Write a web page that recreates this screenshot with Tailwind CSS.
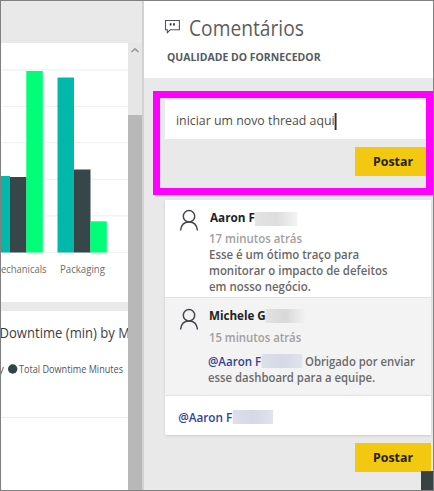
<!DOCTYPE html>
<html lang="pt">
<head>
<meta charset="utf-8">
<title>Comentários</title>
<script src="https://cdn.jsdelivr.net/npm/@tailwindcss/browser@4"></script>
</head>
<body class="bg-[#e9e9e9]">
<div class="relative flex h-[491px] w-[434px] overflow-hidden border border-[#808080] bg-[#e9e9e9] font-['Open_Sans','Noto_Sans',sans-serif] whitespace-nowrap">
  <main class="flex w-[141px] shrink-0 flex-col">
    <div class="h-[42px]"></div>
    <div class="flex flex-1">
      <div class="flex w-[127px] flex-col overflow-hidden">
        <section class="h-[259px] bg-white">
          <svg class="block" width="127" height="259" viewBox="1 43 127 259" font-family="Open Sans, Noto Sans, sans-serif">
            <path d="M1 69.8H128M1 106.3H128M1 142.6H128M1 179.3H128M1 215.8H128M1 252.3H128" stroke="#f1f1f1" stroke-width="1.3"/>
            <rect x="1" y="176" width="9" height="76.500" fill="#01b8aa"/>
            <rect x="10" y="177" width="16.500" height="75.500" fill="#374649"/>
            <rect x="26.300" y="71" width="16.500" height="181.500" fill="#00ff78"/>
            <rect x="57.500" y="77.500" width="16.500" height="175" fill="#01b8aa"/>
            <rect x="74" y="169.500" width="16.500" height="83" fill="#374649"/>
            <rect x="90.300" y="221.300" width="16.500" height="31.200" fill="#00ff78"/>
            <text x="46.500" y="273" text-anchor="end" font-size="10.500" fill="#6d6d6d" textLength="54" lengthAdjust="spacingAndGlyphs">Mechanicals</text>
            <text x="60" y="273" font-size="10.500" fill="#6d6d6d" textLength="45" lengthAdjust="spacingAndGlyphs">Packaging</text>
          </svg>
        </section>
        <section class="mt-[9px] flex-1 bg-white">
          <svg class="block" width="127" height="179" viewBox="1 311 127 179" font-family="Open Sans, Noto Sans, sans-serif">
            <text x="-0.500" y="338" font-size="14" fill="#3d3d3d" textLength="130.500" lengthAdjust="spacingAndGlyphs">Downtime (min) by M</text>
            <text x="-1.500" y="373" font-size="10.500" fill="#555">y</text>
            <circle cx="12.700" cy="369" r="4.700" fill="#2f4548"/>
            <text x="19" y="373" font-size="10.500" fill="#555" textLength="104" lengthAdjust="spacingAndGlyphs">Total Downtime Minutes</text>
            <path d="M1 417.500H128" stroke="#ececec"/>
          </svg>
        </section>
      </div>
      <div class="flex w-[14px] flex-col bg-[#e6e6e6]">
        <svg class="h-[72px] w-[14px]" viewBox="0 0 14 72" fill="none"><path d="M3.500 9 7 5.800 10.500 9" stroke="#9a9a9a" stroke-width="1.600"/></svg>
        <div class="flex-1 bg-[#b8b8b8]"></div>
      </div>
    </div>
  </main>
  <aside class="flex min-w-0 flex-1 flex-col border-l-2 border-l-[#d2d2d2]">
    <header class="h-[77px] shrink-0 bg-white pt-[13px]">
      <div class="flex pl-5">
        <svg class="mt-[5px] h-4 w-4 shrink-0" viewBox="0 0 16 16" fill="none"><path d="M1.500 1.500H15.400V10.800H6.200L3.300 13.700V10.800H1.500Z" stroke="#55525c" stroke-width="1.100"/><path d="M6.600 4.200v2.300M10 4.200v2.300" stroke="#222244" stroke-width="1.700"/></svg>
        <h1 class="ml-[9px] origin-left scale-x-[0.893] text-[21.500px] leading-7 text-[#5c5c5c]">Comentários</h1>
      </div>
      <h2 class="mt-[7px] ml-[23px] origin-left scale-x-[0.95] text-[11px] leading-4 font-bold text-[#565a5d]">QUALIDADE DO FORNECEDOR</h2>
    </header>
    <div class="flex flex-1 flex-col pt-[22px] pr-[2px] pl-[21px]">
      <div class="h-[39px] shrink-0 bg-white pl-[11px] text-[13px] text-[#4f4f46]"><div class="flex h-full w-max origin-left scale-x-[0.95] items-center pt-[3px]">iniciar um novo thread aqui<span class="h-[17px] w-[1.500px] bg-[#333]"></span></div></div>
      <button class="mt-2 h-[29px] w-[76px] shrink-0 self-end bg-[#f2c811] text-[13px] leading-[29px] font-bold text-[#222211]"><span class="inline-block scale-x-[0.95]">Postar</span></button>
      <section class="mt-[24px] shrink-0 bg-white shadow-sm">
        <article class="flex h-[97px] pl-[14px] text-[12.500px] leading-4 font-semibold">
          <svg class="mt-[9px] h-[23px] w-5 shrink-0" viewBox="0 0 20 23" fill="none" stroke="#44474f" stroke-width="1.500"><circle cx="10" cy="7.300" r="5.700"/><path d="M1.500 21.500C2 16.500 5 13 10 13s8 3.500 8.500 8.500"/></svg>
          <div class="ml-[10px] pt-[10px]">
            <div class="flex origin-left scale-x-[0.94] pl-[1px] font-bold text-[#222]">Aaron F<span class="mt-[2px] h-[14px] w-[45px] bg-linear-to-r from-[#e4e4e4] via-[#dddddd] to-[#f4f4f4]"></span></div>
            <div class="mt-[5px] w-max origin-left scale-x-[0.915] text-[#a0a0a0]">17 minutos atrás</div>
            <p class="w-max origin-left scale-x-[0.914] text-[#686868]">Esse é um ótimo traço para<br>monitorar o impacto de defeitos<br>em nosso negócio.</p>
          </div>
        </article>
        <article class="flex h-[99px] border-y border-[#e2e2e2] bg-[#f3f3f3] pl-[14px] text-[12.500px] leading-4 font-semibold">
          <svg class="mt-[10px] h-[23px] w-5 shrink-0" viewBox="0 0 20 23" fill="none" stroke="#44474f" stroke-width="1.500"><circle cx="10" cy="7.300" r="5.700"/><path d="M1.500 21.500C2 16.500 5 13 10 13s8 3.500 8.500 8.500"/></svg>
          <div class="ml-[9px] pt-[10px]">
            <div class="flex w-max origin-left scale-x-[0.93] pl-[1px] font-bold text-[#222]">Michele G<span class="mt-px h-[14px] w-[43px] bg-linear-to-r from-[#e2e2e2] via-[#d8d8d8] to-[#f3f3f3]"></span></div>
            <div class="mt-[6px] w-max origin-left scale-x-[0.908] pl-[1px] text-[#a0a0a0]">15 minutos atrás</div>
            <div class="mt-[8px] flex w-max origin-left scale-x-[0.924] text-[#6a6a6a]"><span class="text-[#33438f]">@Aaron F</span><span class="mr-[3px] h-[14px] w-[44px] bg-linear-to-r from-[#dddfe9] via-[#d5d8e6] to-[#e0e4ec]"></span><span class="origin-left scale-x-[0.98]">Obrigado por enviar</span></div>
            <div class="w-max origin-left scale-x-[0.907] text-[#6a6a6a]">esse dashboard para a equipe.</div>
          </div>
        </article>
        <div class="flex h-[39px] w-max origin-left scale-x-[0.94] pt-[14px] pl-[14px] text-[12.500px] leading-4 font-semibold text-[#33438f]">@Aaron F<span class="h-[14px] w-[43px] bg-linear-to-r from-[#dddfe9] via-[#d5d8e6] to-[#e0e4ec]"></span></div>
      </section>
      <button class="mt-[8px] h-[29px] w-[76px] shrink-0 self-end bg-[#f2c811] text-[13px] leading-[29px] font-bold text-[#222211]"><span class="inline-block scale-x-[0.95]">Postar</span></button>
    </div>
  </aside>
  <div class="absolute top-[90px] left-[152px] h-[104px] w-[280px] border-[7px] border-[#ff00ff]"></div>
  <div class="absolute right-0 bottom-0 h-[19px] w-[12px] bg-[#3a4143]"></div>
</div>
</body>
</html>
